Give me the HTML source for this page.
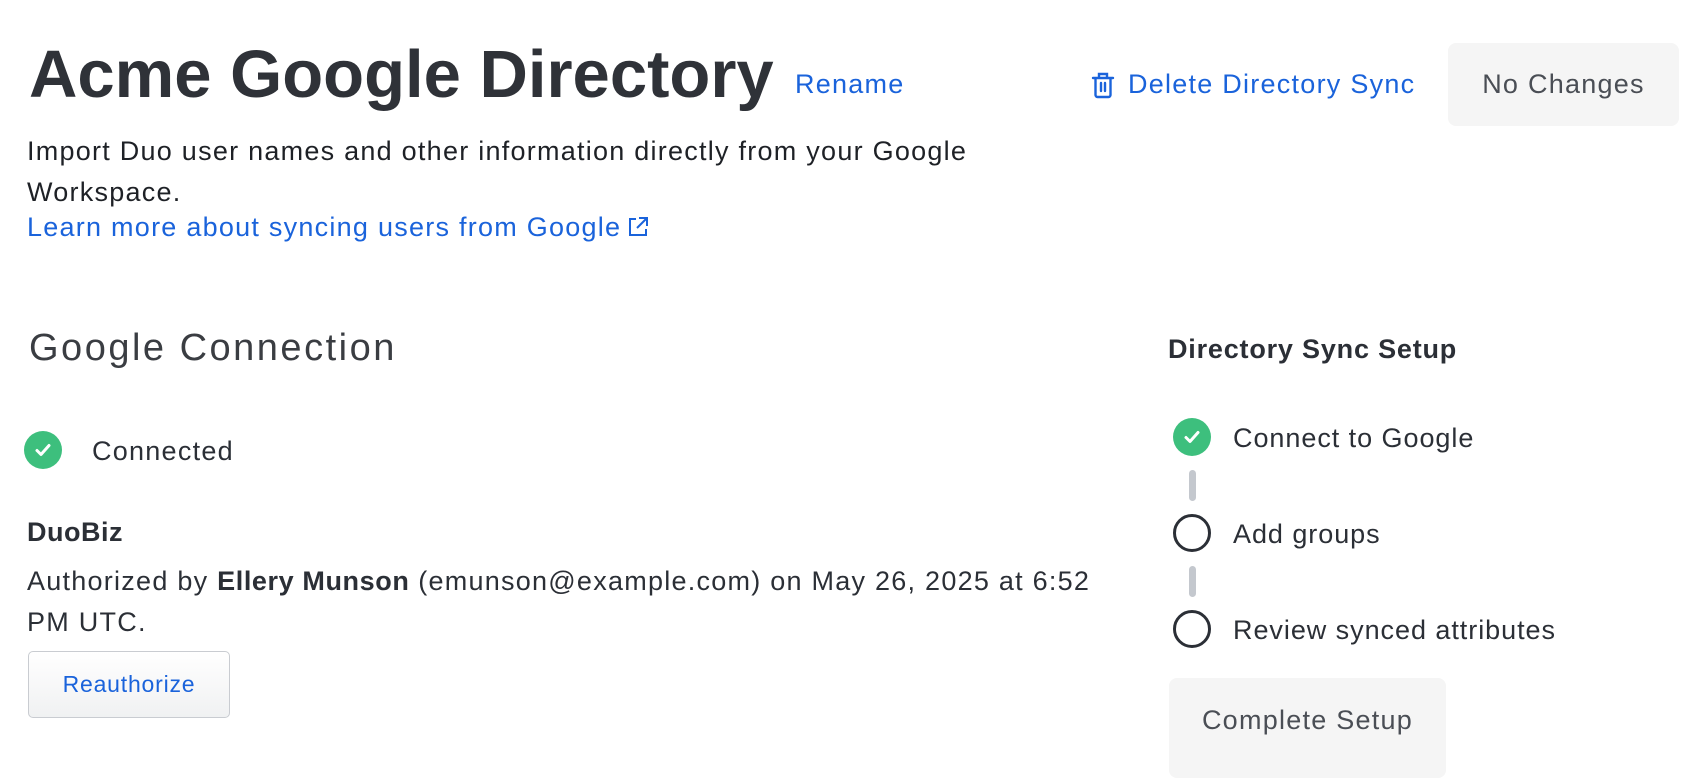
<!DOCTYPE html>
<html><head><meta charset="utf-8"><style>
*{margin:0;padding:0;box-sizing:border-box}
body{width:1690px;height:754px;overflow:hidden;background:#fff;font-family:"Liberation Sans",sans-serif;color:#2b2f36;position:relative}
.a{position:absolute;white-space:nowrap}
.t{font-size:27px;letter-spacing:1.25px}
.s{letter-spacing:0.95px}
.blue{color:#1a63db}
.circ{position:absolute;width:38px;height:38px;border-radius:50%}
.ok{background:#3dbf7d}
.ok svg{position:absolute;left:9px;top:9px}
.empty{border:3.5px solid #2b2f36;background:#fff}
.bar{position:absolute;width:7px;height:31px;border-radius:4px;background:#c4c8ce;left:1189px}
</style></head><body>
<div class="a" style="left:29px;top:36px;font-size:67px;font-weight:bold;letter-spacing:0px;color:#2f3238">Acme Google Directory</div>
<div class="a blue t" style="left:795px;top:69px">Rename</div>
<svg class="a" style="left:1091px;top:72px" width="24" height="27" viewBox="0 0 24 27" fill="none" stroke="#1a63db" stroke-width="2.4" stroke-linecap="round"><path d="M2 6h20M8 6V2h8v4M4.5 6v17a2 2 0 0 0 2 2h11a2 2 0 0 0 2-2V6M10 11v8M14 11v8"/></svg>
<div class="a blue t" style="left:1128px;top:69px">Delete Directory Sync</div>
<div class="a t" style="left:1448px;top:43px;width:231px;height:83px;background:#f5f5f5;border-radius:8px;color:#4a4e55;text-align:center;line-height:83px">No Changes</div>
<div class="a t" style="left:27px;top:131px;line-height:41px;color:#1e2126">Import Duo user names and other information directly from your Google<br>Workspace.</div>
<div class="a blue t" style="left:27px;top:212px">Learn more about syncing users from Google<svg style="vertical-align:-2px;margin-left:6px" width="22" height="22" viewBox="0 0 22 22" fill="none" stroke="#1a63db" stroke-width="2"><path d="M9 3H3v16h16v-6M12 2h8v8M20 2L10 12"/></svg></div>
<div class="a" style="left:29px;top:327px;font-size:38px;color:#3a3d42;letter-spacing:2.5px">Google Connection</div>
<div class="circ ok" style="left:24px;top:431px"><svg width="20" height="20" viewBox="0 0 20 20" fill="none" stroke="#fff" stroke-width="3" stroke-linecap="round" stroke-linejoin="round"><path d="M4 10.5l4 4 8-9"/></svg></div>
<div class="a t" style="left:92px;top:436px">Connected</div>
<div class="a t" style="left:27px;top:517px;font-weight:bold;letter-spacing:0.5px">DuoBiz</div>
<div class="a t" style="left:27px;top:561px;line-height:41px">Authorized by <b style="letter-spacing:0.6px">Ellery Munson</b> (emunson@example.com) on May 26, 2025 at 6:52<br>PM UTC.</div>
<div class="a blue" style="left:28px;top:651px;width:202px;height:67px;border:1.5px solid #c9ccd1;border-radius:5px;background:linear-gradient(#fff,#f0f1f2);font-size:23px;letter-spacing:0.8px;text-align:center;line-height:64px">Reauthorize</div>
<div class="a t" style="left:1168px;top:334px;font-weight:bold;letter-spacing:0.8px">Directory Sync Setup</div>
<div class="circ ok" style="left:1173px;top:418px"><svg width="20" height="20" viewBox="0 0 20 20" fill="none" stroke="#fff" stroke-width="3" stroke-linecap="round" stroke-linejoin="round"><path d="M4 10.5l4 4 8-9"/></svg></div>
<div class="a t s" style="left:1233px;top:423px">Connect to Google</div>
<div class="bar" style="top:470px"></div>
<div class="circ empty" style="left:1173px;top:514px"></div>
<div class="a t s" style="left:1233px;top:519px">Add groups</div>
<div class="bar" style="top:566px"></div>
<div class="circ empty" style="left:1173px;top:610px"></div>
<div class="a t s" style="left:1233px;top:615px">Review synced attributes</div>
<div class="a t" style="left:1169px;top:678px;width:277px;height:100px;background:#f5f5f5;border-radius:8px;color:#4a4e55;text-align:center;padding-top:27px">Complete Setup</div>
</body></html>
